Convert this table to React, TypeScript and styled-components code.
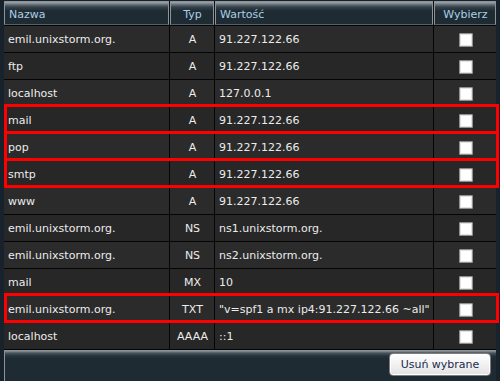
import React from 'react';
import styled, { createGlobalStyle, css } from 'styled-components';

const COLS = '165px 44px 218px 62px';

const GlobalStyle = createGlobalStyle`
  html, body {
    margin: 0;
    padding: 0;
    background: #18222c;
  }
  body {
    font-family: "DejaVu Sans", Verdana, sans-serif;
    font-size: 11px;
  }
`;

const Page = styled.div`
  width: 500px;
  height: 381px;
  box-sizing: border-box;
  padding: 1px 4px 0 4px;
  overflow: hidden;
  background: #18222c;
  display: flex;
  flex-direction: column;
`;

const HeaderRow = styled.div`
  display: grid;
  grid-template-columns: ${COLS};
  column-gap: 1px;
  height: 24px;
  background: #0c1014;
`;

const HeaderCell = styled.div<{ $align?: 'left' | 'center' }>`
  box-sizing: border-box;
  border: 1px solid #8d9499;
  border-bottom-color: #56626a;
  background: linear-gradient(
    to bottom,
    #a3a9ad 0px,
    #737d83 2px,
    #33414a 5px,
    #1f2b33 9px,
    #1f2b33 100%
  );
  color: #a9cfe6;
  display: flex;
  align-items: center;
  justify-content: ${(p) => (p.$align === 'center' ? 'center' : 'flex-start')};
  padding: 2px 3px 0 4px;
  white-space: nowrap;
`;

const Body = styled.div`
  display: grid;
  row-gap: 1px;
  padding: 1px 0;
  background: #050505;
`;

const Row = styled.div<{ $alt?: boolean; $marked?: boolean }>`
  position: relative;
  display: grid;
  grid-template-columns: ${COLS};
  column-gap: 1px;
  height: 26px;
  background: #050505;
  --row-bg: ${(p) => (p.$alt ? '#272727' : '#2b2b2b')};
  ${(p) =>
    p.$marked &&
    css`
      &::after {
        content: '';
        position: absolute;
        left: 0;
        right: -3px;
        top: -3px;
        bottom: -1px;
        border: 3px solid #ff0000;
        pointer-events: none;
      }
    `}
`;

const Cell = styled.div<{ $align?: 'left' | 'center' }>`
  display: flex;
  align-items: center;
  justify-content: ${(p) => (p.$align === 'center' ? 'center' : 'flex-start')};
  padding: 0 3px 0 4px;
  background: var(--row-bg);
  color: #ececec;
  white-space: nowrap;
  overflow: visible;
`;

const Check = styled.input.attrs({ type: 'checkbox' })`
  appearance: none;
  -webkit-appearance: none;
  width: 14px;
  height: 14px;
  margin: 1px 0 0 1px;
  box-sizing: border-box;
  border: 1px solid #8f8f8f;
  background: #ffffff;
  box-shadow: inset 0 0 0 1px #e2e2e2;
  border-radius: 1px;
`;

const Footer = styled.div`
  flex: 1;
  box-sizing: border-box;
  border-top: 1px solid #8d9499;
  border-left: 1px solid #8d9499;
  background: linear-gradient(
    to bottom,
    #8a9296 0px,
    #4a565d 2px,
    #25323a 5px,
    #1f2b33 8px,
    #1f2b33 100%
  );
  display: flex;
  justify-content: flex-end;
  align-items: flex-start;
  padding: 2px 5px 0 0;
`;

const Button = styled.button`
  width: 102px;
  height: 23px;
  box-sizing: border-box;
  border: 1px solid #7c7c7c;
  border-radius: 4px;
  background: linear-gradient(to bottom, #ffffff 0%, #f3f3f3 45%, #e2e2e2 100%);
  box-shadow: inset 0 0 0 1px #ffffff;
  color: #1b2a4e;
  font-family: "DejaVu Sans", Verdana, sans-serif;
  font-size: 11px;
  padding: 0;
  cursor: pointer;
`;

type Rec = { name: string; type: string; value: string; marked?: boolean };

const records: Rec[] = [
  { name: 'emil.unixstorm.org.', type: 'A', value: '91.227.122.66' },
  { name: 'ftp', type: 'A', value: '91.227.122.66' },
  { name: 'localhost', type: 'A', value: '127.0.0.1' },
  { name: 'mail', type: 'A', value: '91.227.122.66', marked: true },
  { name: 'pop', type: 'A', value: '91.227.122.66', marked: true },
  { name: 'smtp', type: 'A', value: '91.227.122.66', marked: true },
  { name: 'www', type: 'A', value: '91.227.122.66' },
  { name: 'emil.unixstorm.org.', type: 'NS', value: 'ns1.unixstorm.org.' },
  { name: 'emil.unixstorm.org.', type: 'NS', value: 'ns2.unixstorm.org.' },
  { name: 'mail', type: 'MX', value: '10' },
  {
    name: 'emil.unixstorm.org.',
    type: 'TXT',
    value: '"v=spf1 a mx ip4:91.227.122.66 ~all"',
    marked: true,
  },
  { name: 'localhost', type: 'AAAA', value: '::1' },
];

export default function App() {
  return (
    <>
      <GlobalStyle />
      <Page>
        <HeaderRow>
          <HeaderCell>Nazwa</HeaderCell>
          <HeaderCell $align="center">Typ</HeaderCell>
          <HeaderCell>Wartość</HeaderCell>
          <HeaderCell $align="center">Wybierz</HeaderCell>
        </HeaderRow>
        <Body>
          {records.map((r, i) => (
            <Row key={i} $alt={i % 2 === 1} $marked={r.marked}>
              <Cell>{r.name}</Cell>
              <Cell $align="center">{r.type}</Cell>
              <Cell>{r.value}</Cell>
              <Cell $align="center">
                <Check aria-label={`Wybierz ${r.name}`} />
              </Cell>
            </Row>
          ))}
        </Body>
        <Footer>
          <Button type="button">Usuń wybrane</Button>
        </Footer>
      </Page>
    </>
  );
}
